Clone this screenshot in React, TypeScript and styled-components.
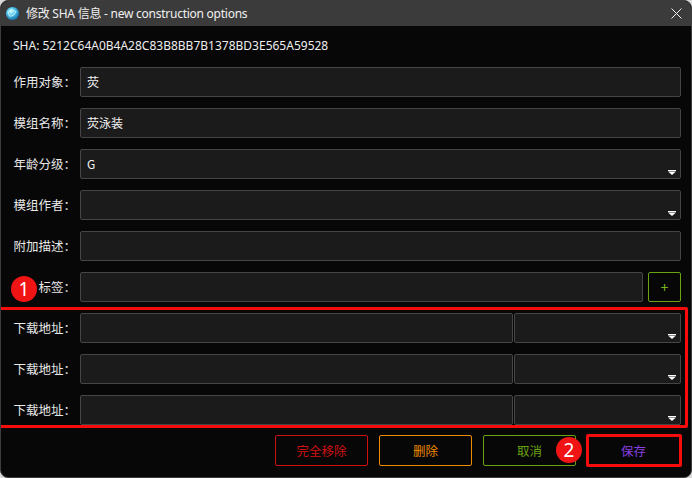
import { FC } from "react"
import styled, { createGlobalStyle } from "styled-components"

const GlobalStyle = createGlobalStyle`
  html, body {
    margin: 0;
    padding: 0;
    background: #d9d9d9;
  }
  body {
    font-family: "Noto Sans", "Noto Sans CJK SC", sans-serif;
  }
`

const Arrow: FC = () => (
  <ArrowIcon width="8" height="5" viewBox="0 0 8 5">
    <rect x="0" y="0" width="8" height="1" fill="#fff" />
    <path d="M0 1.5 L8 1.5 L4 5 Z" fill="#fff" />
  </ArrowIcon>
)

const Field: FC<{ label: string; value?: string; select?: boolean }> = ({ label, value, select }) => (
  <Row>
    <Label>{label}</Label>
    <Input>
      {value}
      {select && <Arrow />}
    </Input>
  </Row>
)

const DownloadRow: FC = () => (
  <Row>
    <Label>下载地址：</Label>
    <Split>
      <Input />
      <Input>
        <Arrow />
      </Input>
    </Split>
  </Row>
)

const App: FC = () => {
  return (
    <>
      <GlobalStyle />
      <Window>
        <TitleBar>
          <AppIcon width="15" height="15" viewBox="0 0 16 16">
            <defs>
              <radialGradient id="g" cx="40%" cy="35%" r="65%">
                <stop offset="0%" stopColor="#d8fbff" />
                <stop offset="45%" stopColor="#4fc8ec" />
                <stop offset="100%" stopColor="#1a6fa8" />
              </radialGradient>
            </defs>
            <circle cx="8" cy="8" r="7" fill="url(#g)" />
            <path d="M3 7 L7 4 L12 6 L9 10 L5 11 Z" fill="none" stroke="#eaffff" strokeWidth="0.8" />
          </AppIcon>
          <Title>修改 SHA 信息 - new construction options</Title>
          <CloseButton>
            <svg width="11" height="11" viewBox="0 0 11 11">
              <path d="M0.5 0.5 L10.5 10.5 M10.5 0.5 L0.5 10.5" stroke="#f2f2f2" strokeWidth="1" />
            </svg>
          </CloseButton>
        </TitleBar>
        <Body>
          <Sha>SHA: 5212C64A0B4A28C83B8BB7B1378BD3E565A59528</Sha>
          <Form>
            <Field label="作用对象：" value="荧" />
            <Field label="模组名称：" value="荧泳装" />
            <Field label="年龄分级：" value="G" select />
            <Field label="模组作者：" select />
            <Field label="附加描述：" />
            <Row>
              <Label>标签：</Label>
              <TagLine>
                <Input />
                <PlusButton>+</PlusButton>
              </TagLine>
              <Badge $left={10} $top={4}>1</Badge>
            </Row>
            <Annotated>
              <DownloadRow />
              <DownloadRow />
              <DownloadRow />
              <Highlight $inset="-6px -7px -3px -7px" />
            </Annotated>
          </Form>
          <Footer>
            <ActionButton $color="#d01010">完全移除</ActionButton>
            <ActionButton $color="#f08a00">删除</ActionButton>
            <Annotated>
              <ActionButton $color="#6aa312">取消</ActionButton>
              <Badge $left={73} $top={2}>2</Badge>
            </Annotated>
            <Annotated>
              <ActionButton $color="#8a3fe0">保存</ActionButton>
              <Highlight $inset="-1px -2px -1px -1px" />
            </Annotated>
          </Footer>
        </Body>
      </Window>
    </>
  )
}

export default App

export const Window = styled('div')(() => ({
  width: '692px',
  height: '478px',
  boxSizing: 'border-box',
  display: 'flex',
  flexDirection: 'column',
  background: '#070707',
  border: '1px solid #3d3d3d',
  borderRadius: '8px',
  overflow: 'hidden',
}))

export const TitleBar = styled('div')(() => ({
  height: '25px',
  flexShrink: 0,
  display: 'flex',
  alignItems: 'center',
  background: '#3b3b3b',
  paddingLeft: '4px',
  gap: '6px',
}))

export const AppIcon = styled('svg')(() => ({
  flexShrink: 0,
}))

export const Title = styled('div')(() => ({
  flex: 1,
  color: '#f0f0f0',
  fontSize: '12px',
  letterSpacing: '-0.25px',
  lineHeight: '16px',
}))

export const CloseButton = styled('div')(() => ({
  width: '30px',
  height: '25px',
  display: 'flex',
  alignItems: 'center',
  justifyContent: 'center',
}))

export const Body = styled('div')(() => ({
  flex: 1,
  display: 'flex',
  flexDirection: 'column',
  padding: '0 10px 0 0',
}))

export const Sha = styled('div')(() => ({
  color: '#eeeeee',
  fontSize: '12px',
  lineHeight: '18px',
  padding: '11px 0 0 12px',
  height: '30px',
  boxSizing: 'border-box',
  marginBottom: '11px',
}))

export const Form = styled('div')(() => ({
  display: 'flex',
  flexDirection: 'column',
  gap: '11px',
}))

export const Row = styled('div')(() => ({
  position: 'relative',
  display: 'flex',
  alignItems: 'center',
  height: '30px',
}))

export const Label = styled('div')(() => ({
  width: '79px',
  flexShrink: 0,
  boxSizing: 'border-box',
  paddingRight: '4px',
  textAlign: 'right',
  color: '#e8e8e8',
  fontFamily: '"Noto Sans CJK SC", sans-serif',
  fontSize: '12.5px',
  lineHeight: '16px',
}))

export const Input = styled('div')(() => ({
  position: 'relative',
  flex: 1,
  height: '30px',
  boxSizing: 'border-box',
  background: '#1b1b1b',
  border: '1px solid #454545',
  borderRadius: '2px',
  color: '#f4f4f4',
  fontFamily: '"Noto Sans CJK SC", sans-serif',
  fontSize: '12px',
  lineHeight: '28px',
  padding: '0 6px',
}))

export const ArrowIcon = styled('svg')(() => ({
  position: 'absolute',
  right: '4px',
  bottom: '3px',
}))

export const Split = styled('div')(() => ({
  flex: 1,
  display: 'grid',
  gridTemplateColumns: '1fr 167px',
  gap: '1px',
}))

export const TagLine = styled('div')(() => ({
  flex: 1,
  display: 'flex',
  gap: '5px',
}))

export const PlusButton = styled('div')(() => ({
  width: '33px',
  height: '30px',
  boxSizing: 'border-box',
  border: '1px solid #6aa312',
  borderRadius: '2px',
  color: '#7ab51c',
  display: 'flex',
  alignItems: 'center',
  justifyContent: 'center',
  fontSize: '14px',
}))

export const Annotated = styled('div')(() => ({
  position: 'relative',
  display: 'flex',
  flexDirection: 'column',
  gap: '11px',
}))

export const Highlight = styled('div')<{ $inset: string }>(({ $inset }) => ({
  position: 'absolute',
  inset: $inset,
  border: '3px solid #f50d0d',
  borderRadius: '2px',
  pointerEvents: 'none',
}))

export const Badge = styled('div')<{ $left: number; $top: number }>(({ $left, $top }) => ({
  position: 'absolute',
  left: `${$left}px`,
  top: `${$top}px`,
  width: '26px',
  height: '26px',
  borderRadius: '50%',
  background: '#f01414',
  color: '#ffffff',
  fontSize: '19px',
  lineHeight: '26px',
  textAlign: 'center',
}))

export const Footer = styled('div')(() => ({
  marginTop: '10px',
  marginRight: '1px',
  display: 'flex',
  justifyContent: 'flex-end',
  gap: '11px',
}))

export const ActionButton = styled('div')<{ $color: string }>(({ $color }) => ({
  width: '93px',
  height: '31px',
  boxSizing: 'border-box',
  border: `1px solid ${$color}`,
  borderRadius: '2px',
  color: $color,
  display: 'flex',
  alignItems: 'center',
  justifyContent: 'center',
  fontFamily: '"Noto Sans CJK SC", sans-serif',
  fontSize: '12.5px',
}))
